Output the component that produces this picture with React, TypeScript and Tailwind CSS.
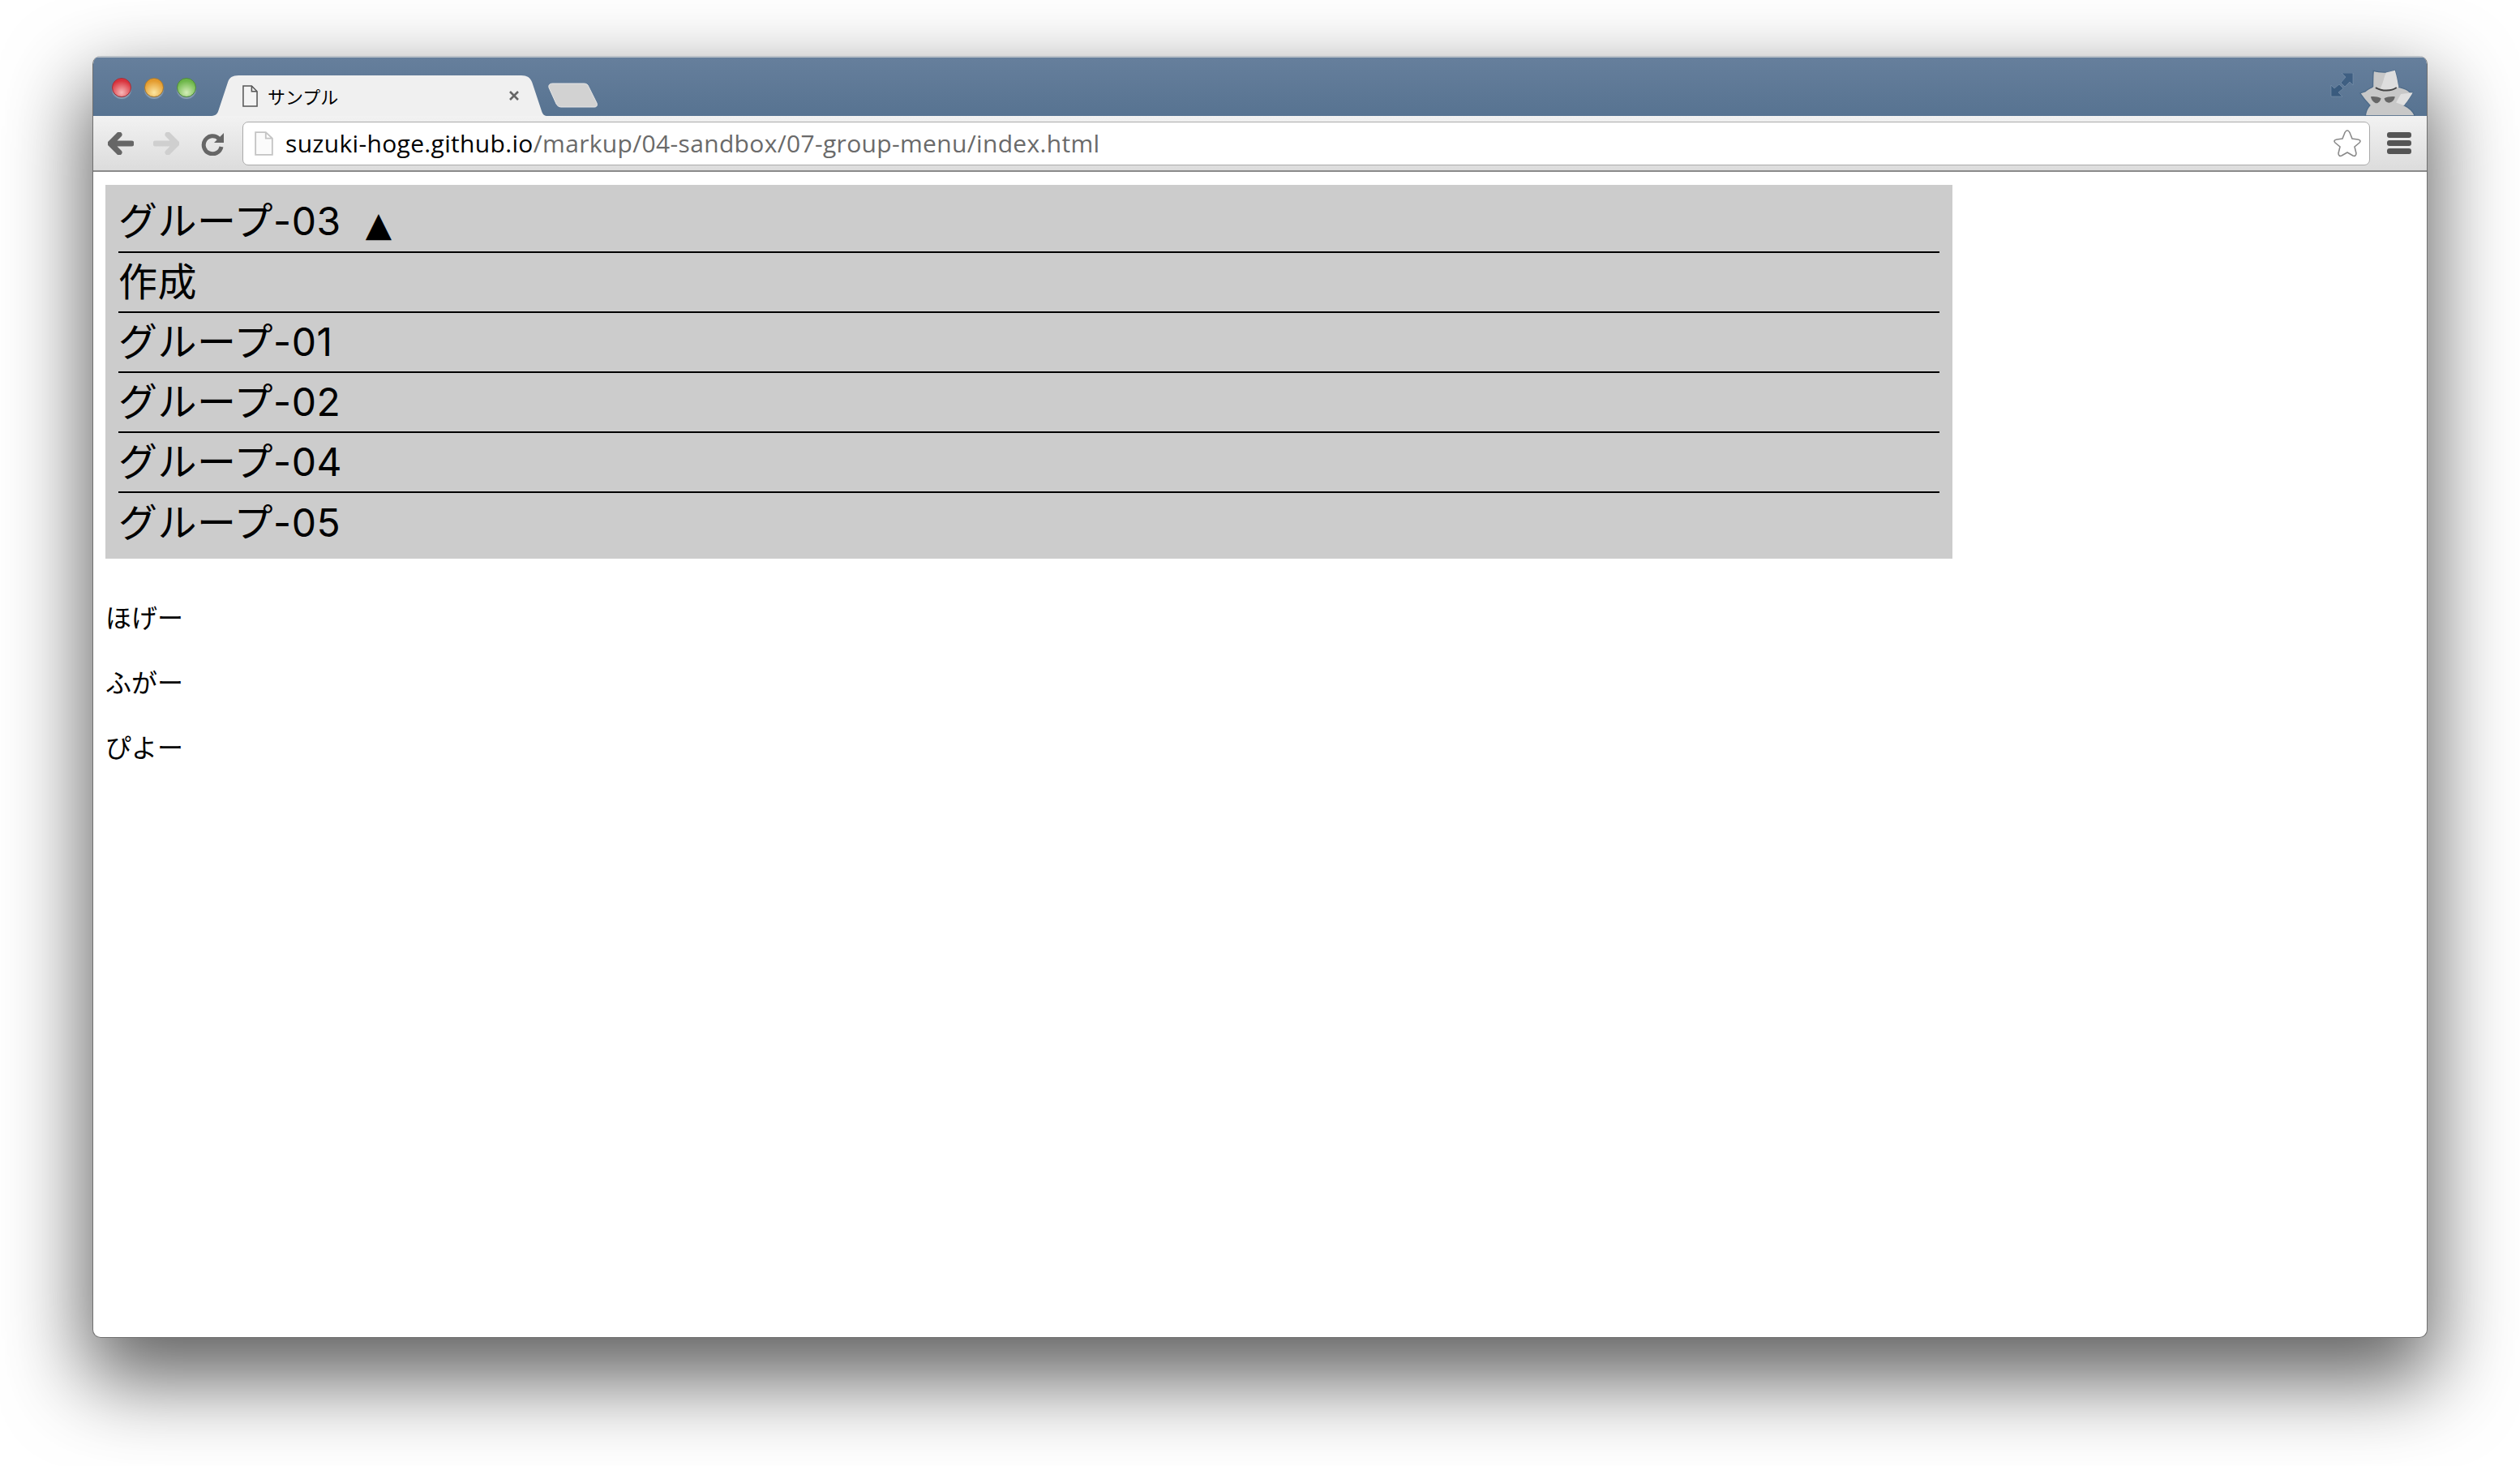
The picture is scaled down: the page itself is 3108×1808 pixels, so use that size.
const groups = ["作成", "グループ-01", "グループ-02", "グループ-04", "グループ-05"];
const cjk = { fontFamily: '"Noto Sans CJK JP", "Noto Sans", sans-serif' };
const page = { fontFamily: 'Inter, "Noto Sans CJK JP", "Noto Sans", sans-serif' };

function Light({ from, to, edge }: { from: string; to: string; edge: string }) {
  return (
    <div
      className="h-6 w-6 rounded-full border shadow-[0_2px_1px_rgba(255,255,255,0.3)]"
      style={{ background: `radial-gradient(circle at 50% 78%, ${to} 0%, ${from} 72%)`, borderColor: edge }}
    />
  );
}

function DocIcon({ w, h, stroke, fill }: { w: number; h: number; stroke: string; fill: string }) {
  return (
    <svg width={w} height={h} viewBox="0 0 20 28" preserveAspectRatio="none" className="shrink-0">
      <path d="M1 1H12L19 8V27H1Z M12 1V8H19" fill={fill} stroke={stroke} strokeWidth="1.6" />
    </svg>
  );
}

export default function App() {
  return (
    <div className="flex h-[1808px] w-[3108px] items-start bg-white pl-[114px] pt-[69px]">
      <div className="flex h-[1581px] w-[2880px] flex-col overflow-hidden rounded-[10px] border-x border-b border-[#6f6f6f] bg-white shadow-[0_44px_100px_8px_rgba(0,0,0,0.62)]">
        {/* title bar */}
        <div className="flex h-[74px] shrink-0 items-end justify-between border-t-2 border-[#b9c0c8] bg-gradient-to-b from-[#667f9c] to-[#577391]">
          <div className="flex items-end">
            <div className="mb-[23px] flex gap-4 pl-[23px]">
              <Light from="#d8323c" to="#f8b8b8" edge="#a53038" />
              <Light from="#e39a2c" to="#fce6a0" edge="#a87a30" />
              <Light from="#6cb648" to="#d4eeb8" edge="#4f8a3c" />
            </div>
            <div className="relative ml-[19px] flex h-[50px] w-[413px] items-center pl-[38px] pr-[33px]">
              <svg viewBox="360 100 930 148" preserveAspectRatio="none" className="absolute inset-0 h-full w-full">
                <path d="M360 248C372 246 376 240 379 228L405 125C409 108 418 100 435 100H1220C1236 100 1245 108 1250 125L1276 228C1279 240 1282 246 1290 248Z" fill="#f0f0f0" />
              </svg>
              <div className="relative flex w-full items-center">
                <DocIcon w={19} h={27} stroke="#555" fill="#f4f4f4" />
                <span className="ml-[12px] text-[22px] leading-7 text-black" style={cjk}>サンプル</span>
                <svg width="14" height="14" viewBox="0 0 14 14" className="ml-auto">
                  <path d="M2 2L12 12M12 2L2 12" stroke="#666" strokeWidth="2.6" />
                </svg>
              </div>
            </div>
            <svg width="62" height="31" viewBox="0 0 62 31" className="mb-[10px] ml-[2px]">
              <path d="M1 6C0 2 3 1 6 1H44C47 1 49 2 50 5L60 25C61 28 60 30 57 30H16C13 30 11 28 10 26Z" fill="#d2d2d2" stroke="#e6e6e6" strokeWidth="1" />
            </svg>
          </div>
          <div className="flex items-end pr-[12px]">
            <svg width="29" height="30" viewBox="0 0 29 30" className="mb-[23px] mr-[5px]">
              <path d="M14 0H28V15L24 11L18 17L13 12L19 5Z" fill="#3f5f82" stroke="#7f97b0" strokeWidth="0.6" />
              <path d="M1 15V29H15L10 24L16 19L11 14L5 19Z" fill="#3a5b7e" stroke="#7f97b0" strokeWidth="0.6" />
            </svg>
            <svg width="73" height="63" viewBox="120 0 220 189">
              <path d="M178 22C200 28 235 30 258 20C266 45 268 65 272 82C290 86 305 92 312 100L324 103C312 125 300 140 292 150C312 160 325 170 332 189H148C150 170 156 160 165 150C150 135 138 120 128 105L148 98C155 90 170 85 176 80C176 60 176 40 178 22Z" fill="#c8c8c8" stroke="#4d6a88" strokeWidth="4" />
              <path d="M225 28L258 20C266 45 268 65 272 82C260 92 225 95 200 92C215 70 215 50 225 28Z" fill="#dedede" />
              <path d="M280 108L324 103C312 125 300 140 292 150L262 140Z" fill="#e0e0e0" />
              <path d="M186 84C210 98 245 98 264 84" fill="none" stroke="#444" strokeWidth="6" />
              <path d="M168 118C180 116 195 118 206 124C204 136 194 144 186 142C176 138 170 128 168 118ZM218 124C230 118 245 116 258 118C256 132 244 142 232 140C224 138 220 132 218 124Z" fill="#666" />
            </svg>
          </div>
        </div>
        {/* toolbar */}
        <div className="flex h-[69px] shrink-0 items-center border-b-2 border-[#8b8b8b] bg-gradient-to-b from-[#f2f2f2] to-[#dcdcdc] pl-[18px] pr-[19px]">
          <svg width="32" height="28" viewBox="0 0 32 28" className="shrink-0">
            <path d="M14 3L3 14L14 25M4 14H29" fill="none" stroke="#666" strokeWidth="7" strokeLinecap="round" strokeLinejoin="round" />
          </svg>
          <svg width="32" height="28" viewBox="0 0 32 28" className="ml-[24px] shrink-0">
            <path d="M18 3L29 14L18 25M28 14H3" fill="none" stroke="#cfcfcf" strokeWidth="7" strokeLinecap="round" strokeLinejoin="round" />
          </svg>
          <svg width="30" height="30" viewBox="0 0 30 30" className="ml-[27px] shrink-0">
            <path d="M22 9A11 11 0 1 0 25 19" fill="none" stroke="#666" strokeWidth="5" />
            <path d="M28 2V14H16Z" fill="#666" />
          </svg>
          <div className="ml-[21px] flex h-[54px] min-w-0 flex-1 items-center rounded-[7px] border border-[#aaaaaa] bg-white pl-[14px] pr-[9px]">
            <DocIcon w={23} h={30} stroke="#c4c4c4" fill="#fbfbfb" />
            <span
              className="ml-[15px] text-[30px] leading-9 tracking-[0.33px] text-[#6a6a6a]"
              style={{ fontFamily: '"Open Sans", "Noto Sans", sans-serif' }}
            >
              <span className="text-black">suzuki-hoge.github.io</span>/markup/04-sandbox/07-group-menu/index.html
            </span>
            <svg width="36" height="36" viewBox="0 0 36 36" className="ml-auto shrink-0">
              <path d="M18 2C20 2 21 4 22 7L24 12L31 13C34 13.500 35 15 33 17L27 22L29 30C29 33 27 34 25 33L18 29L11 33C9 34 7 33 7 30L9 22L3 17C1 15 2 13.500 5 13L12 12L14 7C15 4 16 2 18 2Z" fill="#fff" stroke="#8a8a8a" strokeWidth="1.600" />
            </svg>
          </div>
          <div className="ml-[21px] flex w-[30px] shrink-0 flex-col gap-[3px]">
            <div className="h-[7px] rounded-[3px] bg-[#555]" />
            <div className="h-[7px] rounded-[3px] bg-[#555]" />
            <div className="h-[7px] rounded-[3px] bg-[#555]" />
          </div>
        </div>
        {/* page */}
        <div className="flex-1 px-[15px] pt-4 text-black" style={page}>
          <div className="w-[2278px] bg-[#cccccc] px-4 py-2">
            <div className="flex h-[76px] items-center border-b-2 border-black text-[48px] font-normal leading-[72px] tracking-[0.5px]">
              グループ-03
              <span className="ml-[30px] mt-[8px] text-[42px] leading-none" style={{ fontFamily: '"DejaVu Sans", sans-serif' }}>▲</span>
            </div>
            {groups.map((g, i) => (
              <div
                key={g}
                className={`flex items-center text-[48px] font-normal leading-[72px] tracking-[0.5px] ${
                  i < groups.length - 1 ? "h-[74px] border-b-2 border-black" : "h-[73px]"
                }`}
              >
                {g}
              </div>
            ))}
          </div>
          <div className="mt-[50px] flex flex-col gap-8 text-[32px] font-normal leading-[48px]">
            <p>ほげー</p>
            <p>ふがー</p>
            <p>ぴよー</p>
          </div>
        </div>
      </div>
    </div>
  );
}
